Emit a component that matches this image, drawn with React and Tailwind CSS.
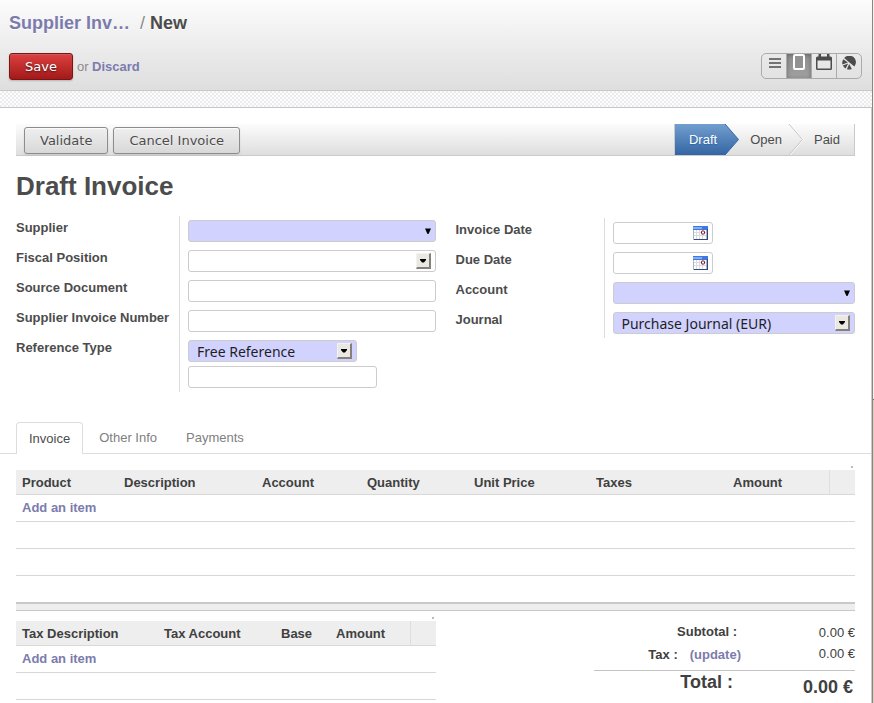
import React from "react";

const fieldBox =
  "block h-[22px] w-full appearance-none rounded-[3px] border border-[#ccc] outline-none";
const selectText = "pl-2 pr-6 pt-px font-['Noto_Sans',sans-serif] text-sm leading-5 text-[#1f1f1f]";
const link = "font-bold text-[#7c7bad]";

function ListIcon() {
  return (
    <svg width="14" height="12" viewBox="0 0 14 12" fill="#4c4c4c" aria-hidden="true">
      <path d="M1 1.200h12v1.600H1zM1 5.200h12v1.600H1zM1 9.200h12v1.600H1z" />
    </svg>
  );
}

function FormIcon() {
  return (
    <svg width="14" height="18" viewBox="0 0 14 18" aria-hidden="true">
      <rect x="2" y="1" width="10" height="14" rx="1" fill="#929292" stroke="#fff" strokeWidth="2" />
    </svg>
  );
}

function CalendarIcon() {
  return (
    <svg width="16" height="18" viewBox="0 0 16 18" aria-hidden="true">
      <path
        fill="#4c4c4c"
        fillRule="evenodd"
        d="M2.500 0h2.500v2.500h6V0h2.500v2.500h1A1.500 1.500 0 0 1 16 4V14.500a1.500 1.500 0 0 1-1.500 1.500h-13A1.500 1.500 0 0 1 0 14.500V4A1.500 1.500 0 0 1 1.500 2.500h1zM1.500 6.500v8h13v-8z"
      />
    </svg>
  );
}

function GraphIcon() {
  return (
    <svg width="14" height="14" viewBox="0 0 14 14" fill="#4c4c4c" aria-hidden="true">
      <path d="M2.200 2A6.600 6.600 0 0 1 12.400 10.400L6.800 6z" />
      <path d="M1.400 3.200L5.900 6.400 0.400 8.600A6.600 6.600 0 0 1 1.400 3.200z" />
      <path d="M0.900 9.600L6.200 7.500 3.600 12.500A6.600 6.600 0 0 1 0.900 9.600z" />
      <path d="M7.200 8L9.800 13A6.600 6.600 0 0 1 4.900 13.200z" />
    </svg>
  );
}

function DateIcon() {
  return (
    <svg width="15" height="14" viewBox="0 0 15 14" aria-hidden="true">
      <rect width="15" height="14" fill="#a9b4c6" />
      <rect x="1" y="4" width="12" height="9" fill="#fff" />
      <rect width="15" height="4" fill="#3f78e0" />
      <rect y="1" width="9" height="2" fill="#86aef5" />
      <path d="M1 6.500h12M1 9.500h12M3.500 4v9M6.500 4v9M9.500 4v9" stroke="#d8dbe0" />
      <path d="M14.500 3v11M1 13.500h14" stroke="#2f4a78" />
      <rect x="8.500" y="5" width="3" height="3" rx="0.500" fill="#fff" stroke="#8b1018" />
    </svg>
  );
}

function Triangle() {
  return (
    <svg width="6" height="7" viewBox="0 0 6 7" aria-hidden="true">
      <path d="M0 0.500h6L3.500 6h-1z" fill="#000" />
    </svg>
  );
}

function Row({ label, id, labelClass, children }) {
  return (
    <div className="flex">
      <label
        htmlFor={id}
        className={"shrink-0 whitespace-nowrap border-r border-[#ddd] pt-0.5 font-bold leading-5 " + labelClass}
      >
        {label}
      </label>
      <div className="min-w-0 flex-1 py-1 pl-2">{children}</div>
    </div>
  );
}

function ComboField({ id }) {
  return (
    <div className="relative">
      <input id={id} type="text" role="combobox" aria-expanded="false" className={fieldBox + " bg-[#d2d2ff] px-2"} />
      <span className="pointer-events-none absolute right-[5px] top-2">
        <Triangle />
      </span>
    </div>
  );
}

function SelectField({ id, value, tone }) {
  return (
    <div className="relative">
      <select id={id} className={fieldBox + " " + selectText + " " + tone}>
        <option>{value}</option>
      </select>
      <span className="pointer-events-none absolute right-[5px] top-[3px] flex h-4 w-[15px] items-center justify-center border-b-2 border-l border-r-2 border-t border-b-[#858078] border-l-[#f4f2ef] border-r-[#858078] border-t-[#f4f2ef] bg-[#ebe7e2]">
        <svg width="6" height="4" viewBox="0 0 6 4" aria-hidden="true">
          <path d="M0 0h6v1L4 3.500H2L0 1z" fill="#000" />
        </svg>
      </span>
    </div>
  );
}

function DateField({ id }) {
  return (
    <div className="relative w-[100px]">
      <input id={id} type="text" className={fieldBox + " bg-white pl-2 pr-6"} />
      <button type="button" aria-label="Select date" className="absolute right-[5px] top-1">
        <DateIcon />
      </button>
    </div>
  );
}

function ItemTable({ columns, emptyRows, footer }) {
  return (
    <table className="w-full table-fixed border-collapse text-left">
      <colgroup>
        {columns.map((c) => (
          <col key={c.name} className={c.width} />
        ))}
        <col className="w-[26px]" />
      </colgroup>
      <thead>
        <tr className="h-6 border-b border-[#d8d8d8] bg-[#eee] text-[#404040]">
          {columns.map((c) => (
            <th key={c.name} className="whitespace-nowrap px-1.5 pt-0.5 font-bold leading-5">
              {c.name}
            </th>
          ))}
          <td className="border-l border-[#ddd]" />
        </tr>
      </thead>
      <tbody>
        <tr className="h-[27px] border-b border-[#d8d8d8]">
          <td colSpan={columns.length + 1} className="px-1.5 leading-5">
            <a href="#add" className={link}>
              Add an item
            </a>
          </td>
        </tr>
        {emptyRows.map((n) => (
          <tr key={n} className="h-[27px] border-b border-[#d8d8d8]">
            <td colSpan={columns.length + 1} />
          </tr>
        ))}
      </tbody>
      {footer}
    </table>
  );
}

const lineColumns = [
  { name: "Product", width: "w-[102px]" },
  { name: "Description", width: "w-[138px]" },
  { name: "Account", width: "w-[105px]" },
  { name: "Quantity", width: "w-[107px]" },
  { name: "Unit Price", width: "w-[122px]" },
  { name: "Taxes", width: "w-[137px]" },
  { name: "Amount", width: "w-[102px]" },
];

const taxColumns = [
  { name: "Tax Description", width: "w-[142px]" },
  { name: "Tax Account", width: "w-[117px]" },
  { name: "Base", width: "w-[55px]" },
  { name: "Amount", width: "w-[80px]" },
];

const actionButton =
  "h-[27px] rounded-[3px] border border-[#8c8c8c] bg-linear-to-b from-[#efefef] to-[#d8d8d8] px-[15px] font-['DejaVu_Sans',sans-serif] text-[13px] leading-5 text-[#4c4c4c] shadow-[0_1px_2px_rgba(0,0,0,0.1),inset_0_1px_1px_rgba(255,255,255,0.8)] [text-shadow:0_1px_1px_rgba(255,255,255,0.5)]";

const viewButton = "flex h-full justify-center";

export default function App() {
  return (
    <div className="flex min-h-screen bg-white font-['Liberation_Sans',Arial,sans-serif] text-[13px] text-[#4c4c4c]">
      <div className="min-w-0 flex-1">
        <header className="border-b border-[#cacaca] bg-linear-to-b from-[#fcfcfc] to-[#dedede] px-[9px] pb-2.5 pt-[11px]">
          <h2 className="flex text-lg leading-6 [text-shadow:0_1px_0_white]">
            <a href="#invoices" className={link}>
              Supplier Inv…
            </a>
            <span className="ml-2.5 mr-[5px] text-[#8a8a8a]">/</span>
            <span className="font-bold">New</span>
          </h2>
          <div className="mt-[18px] flex items-start justify-between">
            <div className="flex items-center">
              <button
                type="button"
                className="h-[27px] rounded-[3px] border border-[#7d1414] bg-linear-to-b from-[#df3f3f] to-[#a21a1a] px-[15px] font-['DejaVu_Sans',sans-serif] leading-5 text-white shadow-[0_1px_2px_rgba(0,0,0,0.2),inset_0_1px_1px_rgba(155,155,155,0.4)] [text-shadow:0_1px_2px_rgba(0,0,0,0.6)]"
              >
                Save
              </button>
              <span className="ml-1 text-[#8a8a8a]">
                or{" "}
                <a href="#discard" className={link}>
                  Discard
                </a>
              </span>
            </div>
            <div className="mr-px flex h-[26px] overflow-hidden rounded-[5px] border border-[#ababab]">
              <button type="button" aria-label="List" className={viewButton + " w-[25px] border-r border-[#ababab] pl-px pt-[3px]"}>
                <ListIcon />
              </button>
              <button
                type="button"
                aria-label="Form"
                className={viewButton + " w-[25px] border-r border-[#ababab] bg-linear-to-b from-[#8f8f8f] to-[#a0a0a0] shadow-[inset_0_1px_4px_rgba(0,0,0,0.3)]"}
              >
                <FormIcon />
              </button>
              <button type="button" aria-label="Calendar" className={viewButton + " w-[25px] border-r border-[#ababab]"}>
                <CalendarIcon />
              </button>
              <button type="button" aria-label="Graph" className={viewButton + " w-6 pt-0.5"}>
                <GraphIcon />
              </button>
            </div>
          </div>
        </header>
        <div className="h-[17px] border-b border-[#c4c4cf] bg-[#fbfbfb] bg-[repeating-conic-gradient(#ebebeb_0_25%,#fcfcfc_0_50%)] bg-[length:4px_4px]" />

        <main className="border-r border-[#c9c9cf] pt-4">
          <div className="mx-4 flex h-8 items-stretch justify-between border-b border-[#cacaca] bg-linear-to-b from-[#fcfcfc] to-[#dedede]">
            <div className="flex gap-[5px] pl-2 pt-[3px]">
              <button type="button" className={actionButton}>
                Validate
              </button>
              <button type="button" className={actionButton}>
                Cancel Invoice
              </button>
            </div>
            <ol className="flex border-l border-r border-[#cacaca] leading-[31px]">
              <li className="flex">
                <span className="bg-linear-to-b from-[#729fcf] to-[#3465a4] pl-3.5 pr-2 text-white [text-shadow:0_1px_1px_#3465a4]">
                  Draft
                </span>
                <svg width="14" height="31" viewBox="0 0 14 31" aria-hidden="true">
                  <defs>
                    <linearGradient id="stage" x1="0" y1="0" x2="0" y2="1">
                      <stop offset="0" stopColor="#729fcf" />
                      <stop offset="1" stopColor="#3465a4" />
                    </linearGradient>
                  </defs>
                  <path d="M0 0L13.500 15.500 0 31z" fill="url(#stage)" />
                  <path d="M0 0L13.500 15.500 0 31" fill="none" stroke="#3465a4" />
                </svg>
              </li>
              <li className="flex">
                <span className="pl-[11px] pr-1.5">Open</span>
                <svg width="16" height="31" viewBox="0 0 16 31" aria-hidden="true">
                  <path d="M2 0L15.500 15.500 2 31" fill="none" stroke="#fff" />
                  <path d="M1 0L14.500 15.500 1 31" fill="none" stroke="#c4c4c4" />
                </svg>
              </li>
              <li className="pl-2.5 pr-3.5">Paid</li>
            </ol>
          </div>

          <h1 className="ml-4 mt-3.5 text-[26px] font-bold leading-8">Draft Invoice</h1>

          <div className="mx-4 mt-3.5 grid grid-cols-2">
            <div>
              <Row label="Supplier" id="supplier" labelClass="w-[164px]">
                <ComboField id="supplier" />
              </Row>
              <Row label="Fiscal Position" id="fiscal" labelClass="w-[164px]">
                <SelectField id="fiscal" value="" tone="bg-white" />
              </Row>
              <Row label="Source Document" id="source" labelClass="w-[164px]">
                <input id="source" type="text" className={fieldBox + " bg-white px-2"} />
              </Row>
              <Row label="Supplier Invoice Number" id="number" labelClass="w-[164px]">
                <input id="number" type="text" className={fieldBox + " bg-white px-2"} />
              </Row>
              <Row label="Reference Type" id="reftype" labelClass="w-[164px]">
                <div className="w-[169px]">
                  <SelectField id="reftype" value="Free Reference" tone="bg-[#d2d2ff]" />
                </div>
                <div className="mt-1 w-[189px]">
                  <input type="text" aria-label="Reference" className={fieldBox + " bg-white px-2"} />
                </div>
              </Row>
            </div>
            <div className="pl-5 pt-0.5">
              <Row label="Invoice Date" id="invdate" labelClass="w-[149px]">
                <DateField id="invdate" />
              </Row>
              <Row label="Due Date" id="duedate" labelClass="w-[149px]">
                <DateField id="duedate" />
              </Row>
              <Row label="Account" id="account" labelClass="w-[149px]">
                <ComboField id="account" />
              </Row>
              <Row label="Journal" id="journal" labelClass="w-[149px]">
                <SelectField id="journal" value="Purchase Journal (EUR)" tone="bg-[#d2d2ff]" />
              </Row>
            </div>
          </div>

          <nav className="mt-[30px] flex gap-[3px] border-b border-[#ddd] pl-4 leading-[30px]">
            <a href="#invoice" className="-mb-px rounded-t-[4px] border border-b-0 border-[#ddd] bg-white px-3 pt-px">
              Invoice
            </a>
            <a href="#other" className="px-[13px] pt-px text-[#808080]">
              Other Info
            </a>
            <a href="#payments" className="px-[13px] pt-px text-[#808080]">
              Payments
            </a>
          </nav>

          <section className="mx-4 pt-3">
            <div className="mb-0.5 ml-auto mr-0.5 h-0.5 w-0.5 bg-[#bbb]" />
            <ItemTable
              columns={lineColumns}
              emptyRows={[1, 2]}
              footer={
                <tfoot>
                  <tr className="h-[27px]">
                    <td colSpan={8} />
                  </tr>
                </tfoot>
              }
            />
            <div className="h-[9px] border-b border-t-2 border-[#c8c8c8] bg-[#eee]" />

            <div className="grid grid-cols-2 pt-1.5">
              <div>
                <div className="mb-0.5 ml-auto mr-0.5 h-0.5 w-0.5 bg-[#bbb]" />
                <ItemTable columns={taxColumns} emptyRows={[1]} />
              </div>
              <dl className="ml-auto mt-[5px] grid w-[261px] grid-cols-[147px_1fr] text-right text-[#404040]">
                <dt className="pr-1 font-bold leading-5">Subtotal :</dt>
                <dd className="leading-[22px]">0.00 €</dd>
                <dt className="whitespace-nowrap font-bold leading-[22px]">
                  Tax :
                  <a href="#update" className="ml-3 text-[#7c7bad]">
                    (update)
                  </a>
                </dt>
                <dd className="leading-5">0.00 €</dd>
                <dt className="mt-1 border-t border-[#c4c4c4] pr-2 text-lg font-bold leading-[22px]">Total :</dt>
                <dd className="mt-1 border-t border-[#c4c4c4] pr-0.5 text-lg font-bold leading-8">0.00 €</dd>
              </dl>
            </div>
          </section>
        </main>
      </div>
      <div className="w-px bg-[#8f8580]" />
      <div className="flex w-px flex-col">
        <div className="h-[399px] bg-[#f3f0ed]" />
        <div className="flex-1 border-t border-[#6f665f] bg-[#dccbb8]" />
      </div>
    </div>
  );
}
